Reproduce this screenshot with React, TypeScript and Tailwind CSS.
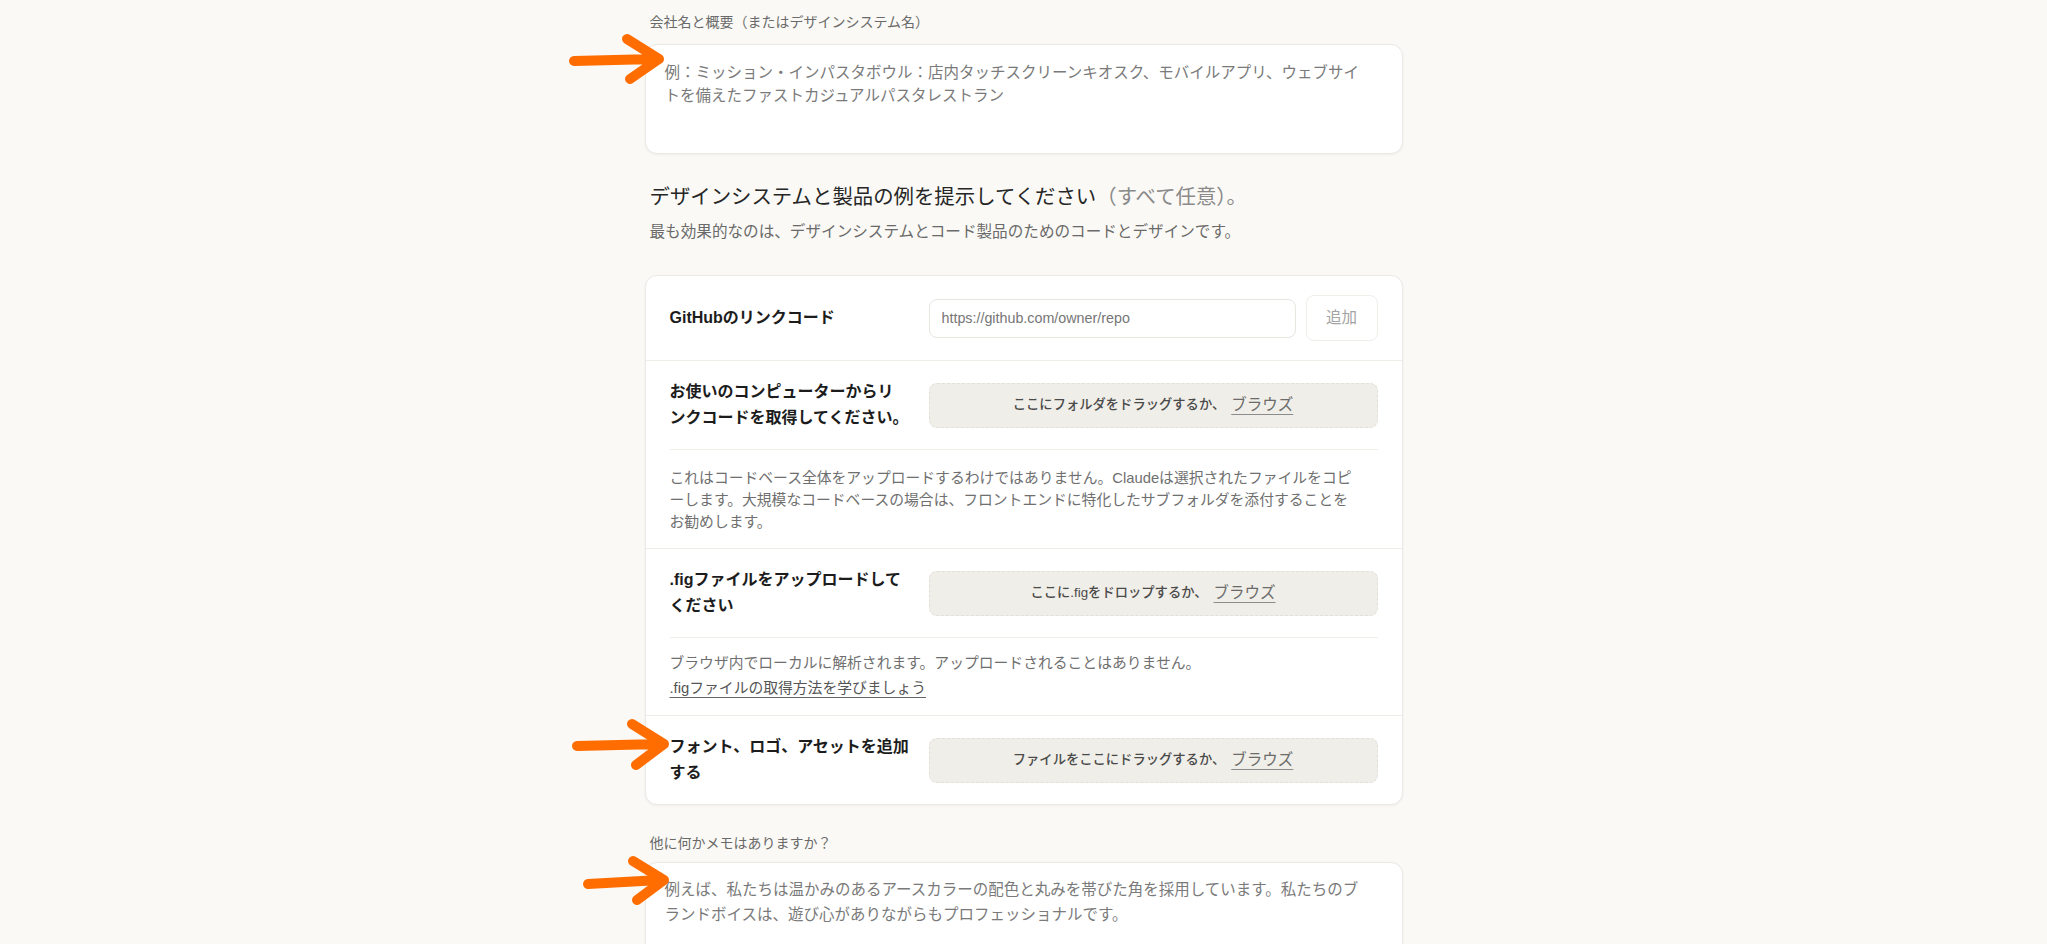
import React from 'react';

const sans = "font-['Liberation_Sans','Noto_Sans_CJK_JP',sans-serif]";

const DropZone = ({ text }: { text: string }) => (
  <div className="flex h-[45px] items-center justify-center rounded-lg border border-dashed border-[#e3e0d8] bg-[#f0eee8]">
    <span className="text-[13.3px] font-medium text-[#4a4a4a]">{text}</span>
    <span className="ml-1.5 text-[15.5px] text-[#6b6b6b] underline decoration-[#8c8c8c] underline-offset-[4px]">ブラウズ</span>
  </div>
);

const Row = ({ label, children, py = 'py-[18px]' }: { label: React.ReactNode; children: React.ReactNode; py?: string }) => (
  <div className={`flex items-center gap-4 px-6 ${py}`}>
    <div className="w-[243px] shrink-0 text-[16px] font-bold leading-[26px] text-[#1c1c1c]">{label}</div>
    <div className="min-w-0 flex-1">{children}</div>
  </div>
);

// textarea look-alike, so the placeholder wraps where the screenshot does
const FakeTextarea = ({ lines, className }: { lines: string[]; className: string }) => (
  <div
    role="textbox"
    aria-multiline="true"
    className={`rounded-xl border border-[#ebe9e4] bg-white px-[19px] text-[15.5px] leading-[23px] text-[#7a7a7a] shadow-[0_1px_3px_rgba(0,0,0,0.05)] ${className}`}
  >
    {lines.map((l, i) => (
      <div key={i} className="whitespace-nowrap">{l}</div>
    ))}
  </div>
);

const Arrows = () => (
  <svg className="pointer-events-none absolute left-0 top-0" width="2047" height="944" fill="none" stroke="#ff6d00" strokeWidth={10} strokeLinecap="round" strokeLinejoin="round">
    <path d="M574 61 L655 59 M627 39 L659 59 L630 79" />
    <path d="M577 746 L660 744 M632 724 L664 744 L636 765" />
    <path d="M588 884 L660 880 M633 861 L664 880 L637 900" />
  </svg>
);

export default function App() {
  return (
    <div className={`relative min-h-screen bg-[#faf9f5] ${sans}`}>
      <div className="mx-auto w-[758px] pt-3">
        <div className="px-[5px] text-[14px] leading-5 text-[#6a6a6a]">会社名と概要（またはデザインシステム名）</div>
        <FakeTextarea
          className="mt-3 h-[110px] pt-4"
          lines={[
            '例：ミッション・インパスタボウル：店内タッチスクリーンキオスク、モバイルアプリ、ウェブサイ',
            'トを備えたファストカジュアルパスタレストラン',
          ]}
        />

        <h2 className="mt-[29px] px-[5px] font-['Liberation_Serif','Noto_Sans_CJK_JP',serif] text-[20.4px] font-normal leading-7 text-[#262626]">
          デザインシステムと製品の例を提示してください<span className="text-[#8a8a8a]">（すべて任意）。</span>
        </h2>
        <p className="mt-[9px] px-[5px] text-[15.6px] leading-6 text-[#6a6a6a]">
          最も効果的なのは、デザインシステムとコード製品のためのコードとデザインです。
        </p>

        <div className="mt-[31px] rounded-xl border border-[#ebe9e4] bg-white shadow-[0_1px_3px_rgba(0,0,0,0.05)]">
          <Row label="GitHubのリンクコード" py="py-[19px]">
            <div className="flex items-center gap-2.5">
              <input
                className="h-[39px] min-w-0 flex-1 rounded-lg border border-[#e8e6e1] bg-white px-3 text-[14.3px] text-[#333] outline-none placeholder:text-[#767676]"
                placeholder="https://github.com/owner/repo"
              />
              <button className="h-[46px] w-[72px] rounded-lg border border-[#f0eee9] bg-white text-[15.5px] text-[#a3a3a3]">追加</button>
            </div>
          </Row>
          <div className="h-px bg-[#efede8]" />
          <Row label={<>お使いのコンピューターからリ<br />ンクコードを取得してください。</>}>
            <DropZone text="ここにフォルダをドラッグするか、" />
          </Row>
          <div className="mx-6 h-px bg-[#efede8]" />
          <p className="px-6 pb-[15px] pt-[17px] text-[14.8px] leading-[22px] text-[#6f6f6f]">
            これはコードベース全体をアップロードするわけではありません。Claudeは選択されたファイルをコピ<br />
            ーします。大規模なコードベースの場合は、フロントエンドに特化したサブフォルダを添付することを<br />
            お勧めします。
          </p>
          <div className="h-px bg-[#efede8]" />
          <Row label={<>.figファイルをアップロードして<br />ください</>}>
            <DropZone text="ここに.figをドロップするか、" />
          </Row>
          <div className="mx-6 h-px bg-[#efede8]" />
          <div className="px-6 pb-4 pt-[14px] text-[14.8px] leading-[22px] text-[#6f6f6f]">
            <p>ブラウザ内でローカルに解析されます。アップロードされることはありません。</p>
            <a className="mt-[3px] inline-block text-[#555] underline decoration-[#666] underline-offset-[4px]">.figファイルの取得方法を学びましょう</a>
          </div>
          <div className="h-px bg-[#efede8]" />
          <Row label={<>フォント、ロゴ、アセットを追加<br />する</>}>
            <DropZone text="ファイルをここにドラッグするか、" />
          </Row>
        </div>

        <div className="mt-7 px-[5px] text-[14px] leading-5 text-[#6a6a6a]">他に何かメモはありますか？</div>
        <FakeTextarea
          className="mt-[9px] h-[120px] pt-[14px] leading-[25px]"
          lines={[
            '例えば、私たちは温かみのあるアースカラーの配色と丸みを帯びた角を採用しています。私たちのブ',
            'ランドボイスは、遊び心がありながらもプロフェッショナルです。',
          ]}
        />
      </div>
      <Arrows />
    </div>
  );
}
